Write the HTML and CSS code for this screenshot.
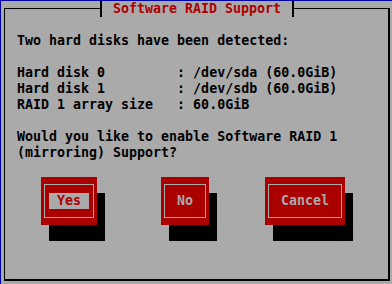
FILE: index.html
```html
<!DOCTYPE html>
<html>
<head>
<meta charset="utf-8">
<link rel="stylesheet" href="styles.css">
</head>
<body>
<div class="screen">
  <div class="window">
    <div class="title">Software RAID Support</div>
    <div class="text">
      <p class="line">Two hard disks have been detected:</p>
      <p class="line"> </p>
      <p class="line">Hard disk 0         : /dev/sda (60.0GiB)</p>
      <p class="line">Hard disk 1         : /dev/sdb (60.0GiB)</p>
      <p class="line">RAID 1 array size   : 60.0GiB</p>
      <p class="line"> </p>
      <p class="line">Would you like to enable Software RAID 1</p>
      <p class="line">(mirroring) Support?</p>
    </div>
    <div class="buttons">
      <div class="btn btn-yes"><div class="btn-inner"><span class="label focus">Yes</span></div></div>
      <div class="btn btn-no"><div class="btn-inner"><span class="label">No</span></div></div>
      <div class="btn btn-cancel"><div class="btn-inner"><span class="label">Cancel</span></div></div>
    </div>
  </div>
</div>
</body>
</html>
```
FILE: styles.css
```css
html, body {
  margin: 0;
  padding: 0;
  background: #aaaaaa;
}
.screen {
  box-sizing: border-box;
  width: 392px;
  height: 284px;
  background: #aaaaaa;
  border-top: 1px solid #0000aa;
  border-left: 1px solid #0000aa;
  overflow: hidden;
  font-family: "DejaVu Sans Mono", "Liberation Mono", monospace;
  font-weight: bold;
  font-size: 13.3px;
  line-height: 16px;
  color: #000000;
}
.window {
  position: relative;
  box-sizing: border-box;
  margin: 7px 0 0 3px;
  width: 386px;
  height: 273px;
  border: 2px solid #000000;
  border-top-width: 1px;
  border-left-width: 1px;
}
.title {
  position: absolute;
  left: 95px;
  top: -8px;
  height: 16px;
  padding: 0 11px;
  background: #aaaaaa;
  border-left: 2px solid #000000;
  border-right: 2px solid #000000;
  color: #aa0000;
  white-space: pre;
}
.text {
  padding: 24px 0 0 12px;
}
.line {
  margin: 0;
  height: 16px;
  white-space: pre;
}
.buttons {
  display: flex;
  margin: 16px 0 0 36px;
}
.btn {
  box-sizing: border-box;
  height: 48px;
  padding: 7px 3px 7px 3px;
  background: #aa0000;
  box-shadow: 8px 16px 0 #000000;
}
.btn-yes { width: 56px; }
.btn-no { width: 48px; margin-left: 64px; }
.btn-cancel { width: 80px; margin-left: 56px; }
.btn-inner {
  box-sizing: border-box;
  height: 34px;
  border: 1px solid #aaaaaa;
  display: flex;
  align-items: center;
  justify-content: center;
}
.label {
  color: #aaaaaa;
  padding: 0 8px;
  height: 16px;
  white-space: pre;
}
.label.focus {
  background: #aaaaaa;
  color: #aa0000;
}
```
